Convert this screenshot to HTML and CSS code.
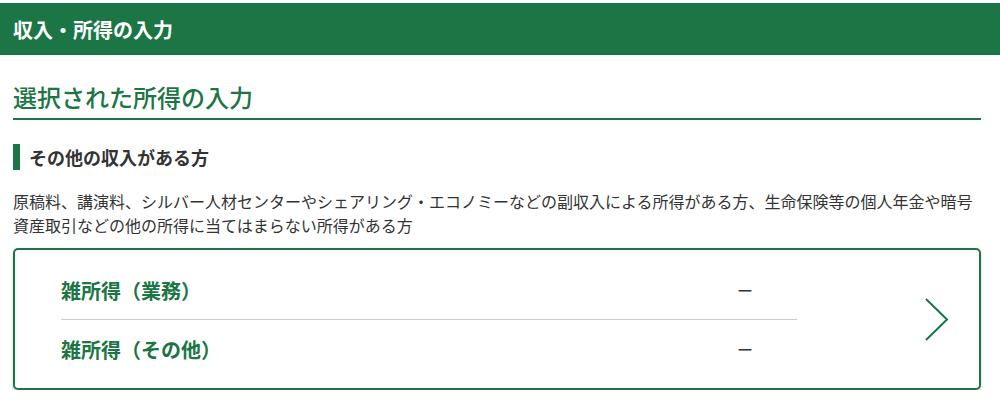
FILE: index.html
```html
<!DOCTYPE html>
<html lang="ja">
<head>
<meta charset="utf-8">
<title>収入・所得の入力</title>
<link rel="stylesheet" href="styles.css">
</head>
<body>
<header class="header">収入・所得の入力</header>
<main class="main">
  <h1 class="page-title">選択された所得の入力</h1>
  <h2 class="section-title">その他の収入がある方</h2>
  <p class="desc">原稿料、講演料、シルバー人材センターやシェアリング・エコノミーなどの副収入による所得がある方、生命保険等の個人年金や暗号資産取引などの他の所得に当てはまらない所得がある方</p>
  <a class="card" href="#">
    <div class="rows">
      <div class="row"><span class="label">雑所得（業務）</span><span class="value">ー</span></div>
      <div class="row"><span class="label">雑所得（その他）</span><span class="value">ー</span></div>
    </div>
    <svg class="chevron" width="24" height="43" viewBox="0 0 24 43" aria-hidden="true">
      <polyline points="1,1 22,21.5 1,42" fill="none" stroke="#1b7544" stroke-width="2"/>
    </svg>
  </a>
</main>
</body>
</html>
```
FILE: styles.css
```css
* { box-sizing: border-box; }
body {
  margin: 0;
  font-family: "Noto Sans CJK JP", "Noto Sans", sans-serif;
  color: #333;
  background: #fff;
}
.header {
  margin-top: 3px;
  height: 52px;
  background: #1b7544;
  color: #fff;
  font-size: 20px;
  font-weight: bold;
  display: flex;
  align-items: center;
  padding-left: 13px;
}
.main {
  padding: 0 19px 0 13px;
}
.page-title {
  margin: 26px 0 0;
  padding-bottom: 5px;
  border-bottom: 2px solid #1b7544;
  font-size: 24px;
  line-height: 32px;
  font-weight: 500;
  color: #1b7544;
}
.section-title {
  margin: 24px 0 0;
  height: 26px;
  line-height: 26px;
  border-left: 7px solid #1b7544;
  padding-left: 9px;
  font-size: 18px;
  font-weight: bold;
  color: #333;
}
.desc {
  margin: 19px 0 0;
  font-size: 16px;
  line-height: 24px;
  color: #333;
}
.card {
  margin-top: 11px;
  display: flex;
  align-items: center;
  border: 2px solid #1b7544;
  border-radius: 5px;
  box-shadow: 0 2px 3px rgba(0, 0, 0, 0.22);
  padding: 11px 0 10px 46px;
  text-decoration: none;
  color: inherit;
}
.rows {
  width: 736px;
}
.row {
  display: grid;
  grid-template-columns: 676px 1fr;
  align-items: center;
  height: 58px;
}
.row + .row {
  border-top: 1px solid #ccc;
  height: 59px;
}
.label {
  font-size: 20px;
  font-weight: bold;
  color: #1b7544;
}
.value {
  font-size: 16px;
  color: #333;
}
.chevron {
  margin-left: auto;
  margin-right: 30px;
  display: block;
}
```
